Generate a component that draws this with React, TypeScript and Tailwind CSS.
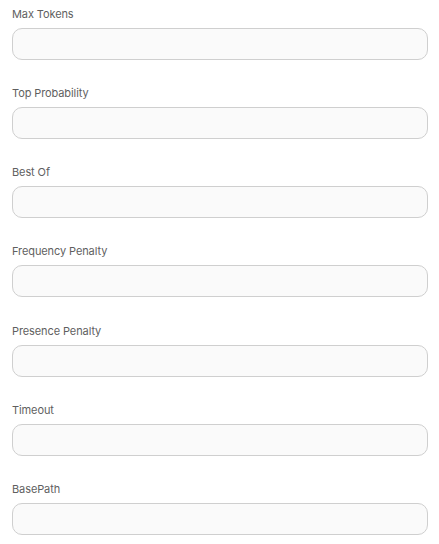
import React from 'react';

const fields = [
  'Max Tokens',
  'Top Probability',
  'Best Of',
  'Frequency Penalty',
  'Presence Penalty',
  'Timeout',
  'BasePath',
];

export default function App() {
  return (
    <div className="min-h-screen bg-white pt-[6px] px-3" style={{ fontFamily: 'Inter, "Noto Sans", sans-serif' }}>
      <div className="flex flex-col gap-[25.17px]">
        {fields.map((label) => (
          <div key={label} className="flex flex-col gap-[6px]">
            <label className="text-[11px] leading-[16px] tracking-[-0.1px] text-[#5f5f5f]">{label}</label>
            <input
              type="text"
              className="w-[416px] h-[32px] rounded-[10px] border border-[#cfcfcf] bg-[#fafafa] px-3 text-sm outline-none"
            />
          </div>
        ))}
      </div>
    </div>
  );
}
